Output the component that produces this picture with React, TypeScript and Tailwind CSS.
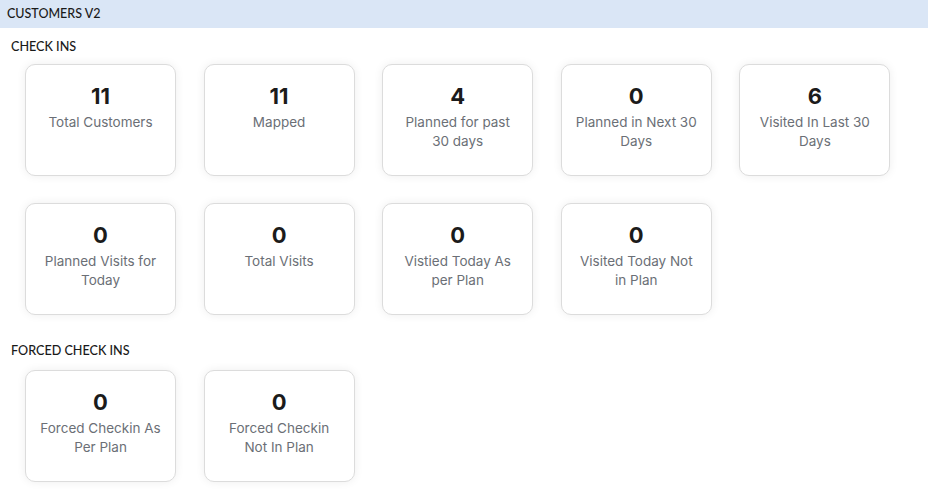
const checkIns = [
  { value: 11, lines: ['Total Customers'] },
  { value: 11, lines: ['Mapped'] },
  { value: 4, lines: ['Planned for past', '30 days'] },
  { value: 0, lines: ['Planned in Next 30', 'Days'] },
  { value: 6, lines: ['Visited In Last 30', 'Days'] },
  { value: 0, lines: ['Planned Visits for', 'Today'] },
  { value: 0, lines: ['Total Visits'] },
  { value: 0, lines: ['Vistied Today As', 'per Plan'] },
  { value: 0, lines: ['Visited Today Not', 'in Plan'] },
];

const forced = [
  { value: 0, lines: ['Forced Checkin As', 'Per Plan'] },
  { value: 0, lines: ['Forced Checkin', 'Not In Plan'] },
];

const StatCard = ({ value, lines }: { value: number; lines: string[] }) => (
  <div className="h-[112px] rounded-[10px] border border-[#dcdcdc] bg-white pt-[18px] text-center shadow-[0_0_10px_rgba(0,0,0,0.07)]">
    <div className="text-[22px] font-bold leading-[26px] text-[#1b1b1b]">{value}</div>
    <div className="mt-[4px] whitespace-nowrap text-[13.5px] leading-[19px] text-[#6b6f76]">
      {lines.map((l, i) => (
        <div key={i}>{l}</div>
      ))}
    </div>
  </div>
);

const SectionTitle = ({ children }: { children: string }) => (
  <div className="pl-[11px] text-[12.6px] font-medium leading-[14px] text-[#1a1a1a]">{children}</div>
);

export default function App() {
  return (
    <div className="h-[496px] w-[928px] bg-white font-['Inter',sans-serif]">
      <div className="flex h-[28px] items-center bg-[#dae6f6] pl-[7px] font-['Lato',sans-serif] text-[12.5px] font-medium text-[#1a1a1a]">
        CUSTOMERS V2
      </div>

      <div className="pt-[12px] font-['Lato',sans-serif]">
        <SectionTitle>CHECK INS</SectionTitle>
      </div>
      <div className="mt-[10px] grid grid-cols-[repeat(5,151px)] gap-x-[27.6px] gap-y-[27px] pl-[25px]">
        {checkIns.map((c, i) => (
          <StatCard key={i} value={c.value} lines={c.lines} />
        ))}
      </div>

      <div className="pt-[29px] font-['Lato',sans-serif]">
        <SectionTitle>FORCED CHECK INS</SectionTitle>
      </div>
      <div className="mt-[12px] grid grid-cols-[repeat(5,151px)] gap-x-[27.6px] pl-[25px]">
        {forced.map((c, i) => (
          <StatCard key={i} value={c.value} lines={c.lines} />
        ))}
      </div>
    </div>
  );
}
